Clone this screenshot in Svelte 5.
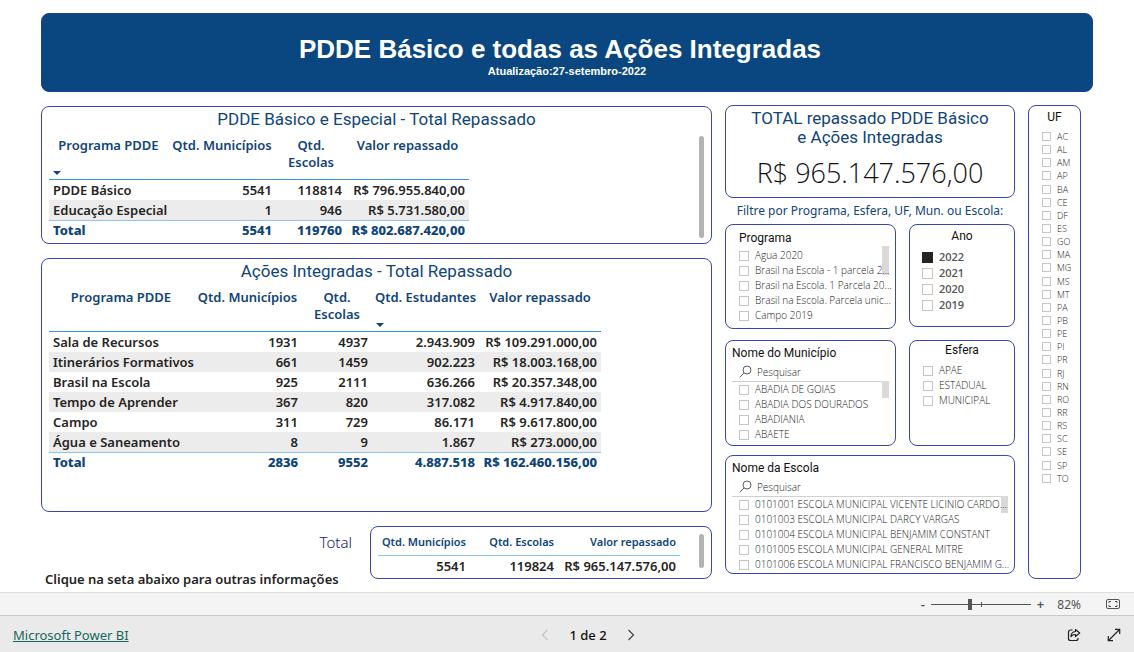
<script>
  const basicCols = [
    { name: 'Programa PDDE', width: 119, sorted: true },
    { name: 'Qtd. Municípios', width: 108 },
    { name: 'Qtd. Escolas', width: 70, wrap: true },
    { name: 'Valor repassado', width: 123 },
  ];
  const basicRows = [
    ['PDDE Básico', '5541', '118814', 'R$ 796.955.840,00'],
    ['Educação Especial', '1', '946', 'R$ 5.731.580,00'],
  ];
  const basicTotal = ['Total', '5541', '119760', 'R$ 802.687.420,00'];

  const actionCols = [
    { name: 'Programa PDDE', width: 144 },
    { name: 'Qtd. Municípios', width: 109 },
    { name: 'Qtd. Escolas', width: 70, wrap: true },
    { name: 'Qtd. Estudantes', width: 107, sorted: true },
    { name: 'Valor repassado', width: 122 },
  ];
  const actionRows = [
    ['Sala de Recursos', '1931', '4937', '2.943.909', 'R$ 109.291.000,00'],
    ['Itinerários Formativos', '661', '1459', '902.223', 'R$ 18.003.168,00'],
    ['Brasil na Escola', '925', '2111', '636.266', 'R$ 20.357.348,00'],
    ['Tempo de Aprender', '367', '820', '317.082', 'R$ 4.917.840,00'],
    ['Campo', '311', '729', '86.171', 'R$ 9.617.800,00'],
    ['Água e Saneamento', '8', '9', '1.867', 'R$ 273.000,00'],
  ];
  const actionTotal = ['Total', '2836', '9552', '4.887.518', 'R$ 162.460.156,00'];

  const programs = [
    'Agua 2020',
    'Brasil na Escola - 1 parcela 2...',
    'Brasil na Escola. 1 Parcela 20...',
    'Brasil na Escola. Parcela unic...',
    'Campo 2019',
  ];
  const years = ['2022', '2021', '2020', '2019'];
  const cities = ['ABADIA DE GOIAS', 'ABADIA DOS DOURADOS', 'ABADIANIA', 'ABAETE'];
  const spheres = ['APAE', 'ESTADUAL', 'MUNICIPAL'];
  const schools = [
    '0101001 ESCOLA MUNICIPAL VICENTE LICINIO CARDO...',
    '0101003 ESCOLA MUNICIPAL DARCY VARGAS',
    '0101004 ESCOLA MUNICIPAL BENJAMIM CONSTANT',
    '0101005 ESCOLA MUNICIPAL GENERAL MITRE',
    '0101006 ESCOLA MUNICIPAL FRANCISCO BENJAMIM G...',
  ];
  const states = 'AC AL AM AP BA CE DF ES GO MA MG MS MT PA PB PE PI PR RJ RN RO RR RS SC SE SP TO'.split(' ');
</script>

{#snippet matrix(cols, rows, total)}
  <table class="matrix">
    <colgroup>
      {#each cols as c}<col style:width="{c.width}px" />{/each}
    </colgroup>
    <thead>
      <tr>
        {#each cols as c}
          <th scope="col" class:sorted={c.sorted} class:wrap={c.wrap}>{c.name}</th>
        {/each}
      </tr>
    </thead>
    <tbody>
      {#each rows as row}
        <tr>{#each row as cell}<td>{cell}</td>{/each}</tr>
      {/each}
    </tbody>
    <tfoot>
      <tr>{#each total as cell}<td>{cell}</td>{/each}</tr>
    </tfoot>
  </table>
{/snippet}

{#snippet options(items, checked)}
  <ul class="options">
    {#each items as item}
      <li><label><input type="checkbox" checked={item === checked} /><span>{item}</span></label></li>
    {/each}
  </ul>
{/snippet}

{#snippet search(id)}
  <label class="search" for={id}>
    <svg width="13" height="13" viewBox="0 0 13 13" fill="none" stroke="#605e5c" aria-hidden="true">
      <circle cx="8" cy="5" r="4" />
      <path d="M5 8 .8 12.2" />
    </svg>
    <input {id} type="text" placeholder="Pesquisar" aria-label="Pesquisar" />
  </label>
{/snippet}

<div class="page">
  <div class="report">
    <header class="banner">
      <h1>PDDE Básico e todas as Ações Integradas</h1>
      <p>Atualização:27-setembro-2022</p>
    </header>

    <main>
      <div class="left">
        <section class="panel basic">
          <h2>PDDE Básico e Especial - Total Repassado</h2>
          {@render matrix(basicCols, basicRows, basicTotal)}
          <span class="bar"></span>
        </section>

        <section class="panel actions">
          <h2>Ações Integradas - Total Repassado</h2>
          {@render matrix(actionCols, actionRows, actionTotal)}
        </section>

        <div class="summary">
          <div class="notes">
            <p class="total-label">Total</p>
            <p class="hint">Clique na seta abaixo para outras informações</p>
          </div>
          <section class="panel grand">
            <table>
              <thead>
                <tr><th scope="col">Qtd. Municípios</th><th scope="col">Qtd. Escolas</th><th scope="col">Valor repassado</th></tr>
              </thead>
              <tbody>
                <tr><td>5541</td><td>119824</td><td>R$ 965.147.576,00</td></tr>
              </tbody>
            </table>
            <span class="bar"></span>
          </section>
        </div>
      </div>

      <div class="filters">
        <section class="panel card">
          <h2>TOTAL repassado PDDE Básico<br />e Ações Integradas</h2>
          <p>R$ 965.147.576,00</p>
        </section>
        <p class="prompt">Filtre por Programa, Esfera, UF, Mun. ou Escola:</p>
        <div class="pair first">
          <section class="panel slicer programs">
            <h3>Programa</h3>
            <span class="scroll"></span>
            {@render options(programs)}
          </section>
          <section class="panel slicer years">
            <h3>Ano</h3>
            {@render options(years, '2022')}
          </section>
        </div>
        <div class="pair">
          <section class="panel slicer searchable">
            <h3>Nome do Município</h3>
            {@render search('busca-municipio')}
            <span class="scroll"></span>
            {@render options(cities)}
          </section>
          <section class="panel slicer spheres">
            <h3>Esfera</h3>
            {@render options(spheres)}
          </section>
        </div>
        <section class="panel slicer searchable schools">
          <h3>Nome da Escola</h3>
          {@render search('busca-escola')}
          <span class="scroll"></span>
          {@render options(schools)}
        </section>
      </div>

      <section class="panel slicer states">
        <h3>UF</h3>
        {@render options(states)}
      </section>
    </main>
  </div>

  <div class="zoombar">
    <button class="step" aria-label="Reduzir">-</button>
    <input type="range" min="0" max="100" value="39" aria-label="Zoom" />
    <button class="step" aria-label="Ampliar">+</button>
    <output>82%</output>
    <button aria-label="Ajustar à página">
      <svg width="14" height="10" viewBox="0 0 14 10" fill="none" stroke="#555" aria-hidden="true">
        <rect x=".5" y=".5" width="13" height="9" rx="1.5" />
        <path d="M5 2.5H3V4M3 6v1.500h2M9 2.500h2V4M11 6v1.500H9" />
      </svg>
    </button>
  </div>

  <footer>
    <a href="#powerbi">Microsoft Power BI</a>
    <nav aria-label="Páginas">
      <button aria-label="Página anterior" disabled>
        <svg width="8" height="12" viewBox="0 0 8 12" fill="none" stroke="#c4c4c4" stroke-width="1.200" aria-hidden="true"><path d="M6.500 1 1.500 6l5 5" /></svg>
      </button>
      <span>1 de 2</span>
      <button aria-label="Próxima página">
        <svg width="8" height="12" viewBox="0 0 8 12" fill="none" stroke="#444" stroke-width="1.200" aria-hidden="true"><path d="m1.500 1 5 5-5 5" /></svg>
      </button>
    </nav>
    <div class="tools">
      <button aria-label="Compartilhar">
        <svg width="14" height="14" viewBox="0 0 14 14" fill="none" stroke="#222" stroke-width="1.200" stroke-linejoin="round" aria-hidden="true">
          <path d="M5.500 2H3.500a2 2 0 0 0-2 2v6.500a2 2 0 0 0 2 2H9a2 2 0 0 0 2-2V10" />
          <path d="M8.500 1.500 12.700 5 8.500 8.500V6.500C6.500 6.400 5 7 3.900 8.700 4 5.700 5.700 3.800 8.500 3.500z" />
        </svg>
      </button>
      <button aria-label="Tela cheia">
        <svg width="14" height="14" viewBox="0 0 14 14" fill="none" stroke="#222" stroke-width="1.200" aria-hidden="true">
          <path d="M1.500 12.500 12.500 1.500M8 1.300h4.700V6M1.300 8v4.700H6" />
        </svg>
      </button>
    </div>
  </footer>
</div>

<style>
  :global(body) {
    margin: 0;
    background: #fff;
    font-family: 'Noto Sans', 'Open Sans', sans-serif;
    color: #252423;
  }
  h1, h2, h3, p, ul { margin: 0; padding: 0; }
  h1, h2, h3 { font-weight: 400; }
  ul { list-style: none; }
  table { border-collapse: collapse; table-layout: fixed; }
  button {
    display: flex;
    align-items: center;
    justify-content: center;
    padding: 0;
    border: 0;
    background: none;
    font: inherit;
    color: inherit;
  }

  .page { display: flex; flex-direction: column; min-height: 100vh; }
  .report { display: flex; flex: 1; flex-direction: column; padding: 13px 41px 0; }
  .banner {
    box-sizing: border-box;
    padding: 19px 0 13px;
    border: 1px solid #1f3f96;
    border-radius: 8px;
    background: #0a4780;
    color: #fff;
    text-align: center;
    font-family: 'Liberation Sans', Arial, sans-serif;
    font-weight: 700;
  }
  .banner h1 { padding-right: 14px; font-size: 26px; line-height: 32px; font-weight: 700; }
  .banner p { font-size: 11px; line-height: 13px; }

  main {
    display: grid;
    flex: 1;
    grid-template-columns: minmax(0, 671fr) minmax(0, 290fr) minmax(0, 53fr);
    gap: 13px;
    padding: 13px 12px 0 0;
  }
  .panel {
    position: relative;
    box-sizing: border-box;
    min-width: 0;
    border: 1px solid #3a47ad;
    border-radius: 8px;
    background: #fff;
  }
  h2, h3 { font-family: Roboto, sans-serif; text-align: center; white-space: nowrap; }
  h2 { font-size: 17px; line-height: 19px; color: #0f4479; }
  h3 { font-size: 12px; line-height: 16px; color: #111; }

  .left { display: flex; flex-direction: column; gap: 14px; padding-top: 1px; }
  .basic, .actions { padding: 3px 7px 0; }
  .basic { padding-bottom: 4px; }
  .actions { flex: 1; }
  .matrix { width: min-content; margin-top: 8px; }
  .matrix th, .matrix td {
    padding: 0 4px;
    font-size: 13px;
    font-weight: 600;
    white-space: nowrap;
  }
  .matrix th {
    position: relative;
    height: 42px;
    padding: 0 1px;
    line-height: 17px;
    vertical-align: top;
    color: #0f4479;
    border-bottom: 1px solid #3b93e0;
  }
  .matrix .wrap { white-space: normal; }
  .sorted::after {
    content: '';
    position: absolute;
    left: 4px;
    bottom: 4px;
    border: 4px solid transparent;
    border-top-color: #0f4479;
    border-bottom: 0;
  }
  .matrix td { height: 20px; line-height: 19px; text-align: right; }
  .matrix td:first-child { text-align: left; }
  tbody tr:nth-child(even) { background: #ececec; }
  .matrix tfoot td {
    height: 18px;
    line-height: 18px;
    font-weight: 800;
    color: #0f4479;
    border-top: 1px solid #8fc6f5;
  }
  .bar {
    position: absolute;
    top: 29px;
    bottom: 5px;
    right: 7px;
    width: 5px;
    border-radius: 3px;
    background: #b3b3b3;
  }

  .summary { display: grid; grid-template-columns: minmax(0, 329fr) minmax(0, 342fr); align-items: start; }
  .notes { display: flex; flex-direction: column; gap: 16px; padding: 5px 0 3px 4px; }
  .total-label { padding-right: 18px; text-align: right; font-size: 15px; font-weight: 300; line-height: 22px; color: #12127a; }
  .hint { font-size: 13px; font-weight: 600; line-height: 20px; white-space: nowrap; }
  .grand { padding: 6px 31px 2px 7px; }
  .grand table { width: 100%; }
  .grand th, .grand td { padding: 0 4px 0 0; text-align: right; white-space: nowrap; font-weight: 600; }
  .grand th { height: 22px; font-size: 11px; line-height: 18px; vertical-align: top; color: #0f4479; border-bottom: 1px solid #8fc6f5; }
  .grand th:nth-child(1) { width: 88px; }
  .grand th:nth-child(2) { width: 84px; }
  .grand td { height: 20px; font-size: 13px; line-height: 19px; }
  .grand .bar { top: 7px; bottom: 10px; }

  .card { padding: 3px 0 4px; text-align: center; }
  .card p { padding-top: 6px; font-family: 'Open Sans', sans-serif; font-size: 27px; font-weight: 300; line-height: 40px; color: #111; }
  .prompt { font-size: 12px; line-height: 26px; text-align: center; white-space: nowrap; color: #0f4479; }
  .pair {
    display: grid;
    grid-template-columns: minmax(0, 171fr) minmax(0, 106fr);
    gap: 13px;
    align-items: start;
  }
  .pair.first { margin-bottom: 11px; }

  .slicer { color: #222; }
  .options { position: relative; font-family: 'Open Sans', sans-serif; font-size: 10px; font-weight: 300; }
  .options label { display: flex; align-items: center; gap: 6px; line-height: 15px; white-space: nowrap; }
  .options input {
    appearance: none;
    box-sizing: border-box;
    flex: none;
    width: 10px;
    height: 10px;
    margin: 0;
    border: 1px solid #c8c6c4;
    background: #fff;
  }
  .options input:checked { border-color: #252423; background: #252423; }
  .programs { padding: 5px 8px 5px 13px; }
  .programs h3, .searchable h3 { text-align: left; }
  .programs .options { padding-top: 2px; }
  .scroll { position: absolute; right: 6px; top: 21px; width: 7px; height: 29px; background: #d9d9d9; }

  .years { padding: 3px 12px 13px; }
  .years .options { padding-top: 5px; font-size: 11px; font-weight: 600; color: #555; }
  .years .options label { line-height: 16px; }
  .years .options input { width: 11px; height: 11px; }

  .searchable { padding: 4px 7px 3px 6px; }
  .searchable .options { padding-left: 7px; }
  .search {
    display: flex;
    align-items: center;
    gap: 5px;
    height: 20px;
    padding-left: 7px;
    border-bottom: 1px solid #d0d0d0;
  }
  .search input {
    min-width: 0;
    flex: 1;
    padding: 1px 0 0;
    border: 0;
    outline: 0;
    background: none;
    font: 300 10px 'Open Sans', sans-serif;
    color: #222;
  }
  .search input::placeholder { color: #222; opacity: 1; }
  .searchable .scroll { top: 40px; height: 17px; }
  .schools { margin-top: 9px; padding-bottom: 1px; }

  .spheres { padding: 1px 13px 37px; }
  .spheres .options { padding-top: 5px; }

  .states { display: flex; flex-direction: column; margin-bottom: 13px; padding: 3px 0 93px 13px; }
  .states h3 { padding-right: 13px; }
  .states .options { display: flex; flex: 1; flex-direction: column; padding-top: 5px; font-size: 9px; }
  .states li { flex: 1; }
  .states .options label { line-height: 13px; }
  .states .options input { width: 9px; height: 9px; }

  .zoombar {
    display: flex;
    align-items: center;
    justify-content: flex-end;
    height: 22px;
    padding-right: 14px;
    border-top: 1px solid #dedede;
    background: #f4f4f4;
    font-size: 12px;
    color: #555;
  }
  .zoombar .step { font-size: 13px; font-weight: 600; }
  .zoombar input {
    appearance: none;
    width: 100px;
    height: 12px;
    margin: 0 6px;
    background:
      linear-gradient(#555, #555) 50px 50% / 1px 5px no-repeat,
      linear-gradient(#555, #555) 0 50% / 100% 1px no-repeat;
  }
  .zoombar input::-webkit-slider-thumb { appearance: none; width: 4px; height: 11px; background: #555; }
  .zoombar output { padding: 0 25px 0 13px; }

  footer {
    display: grid;
    grid-template-columns: 1fr auto 1fr;
    align-items: center;
    height: 34px;
    padding: 2px 13px 0;
    border-top: 1px solid #c8c8c8;
    background: #eaeaea;
    font-size: 13px;
  }
  footer a { color: #15665c; }
  footer nav { display: flex; align-items: center; gap: 20px; margin-left: 42px; font-weight: 500; color: #111; }
  .tools { display: flex; justify-content: flex-end; gap: 26px; }
</style>
